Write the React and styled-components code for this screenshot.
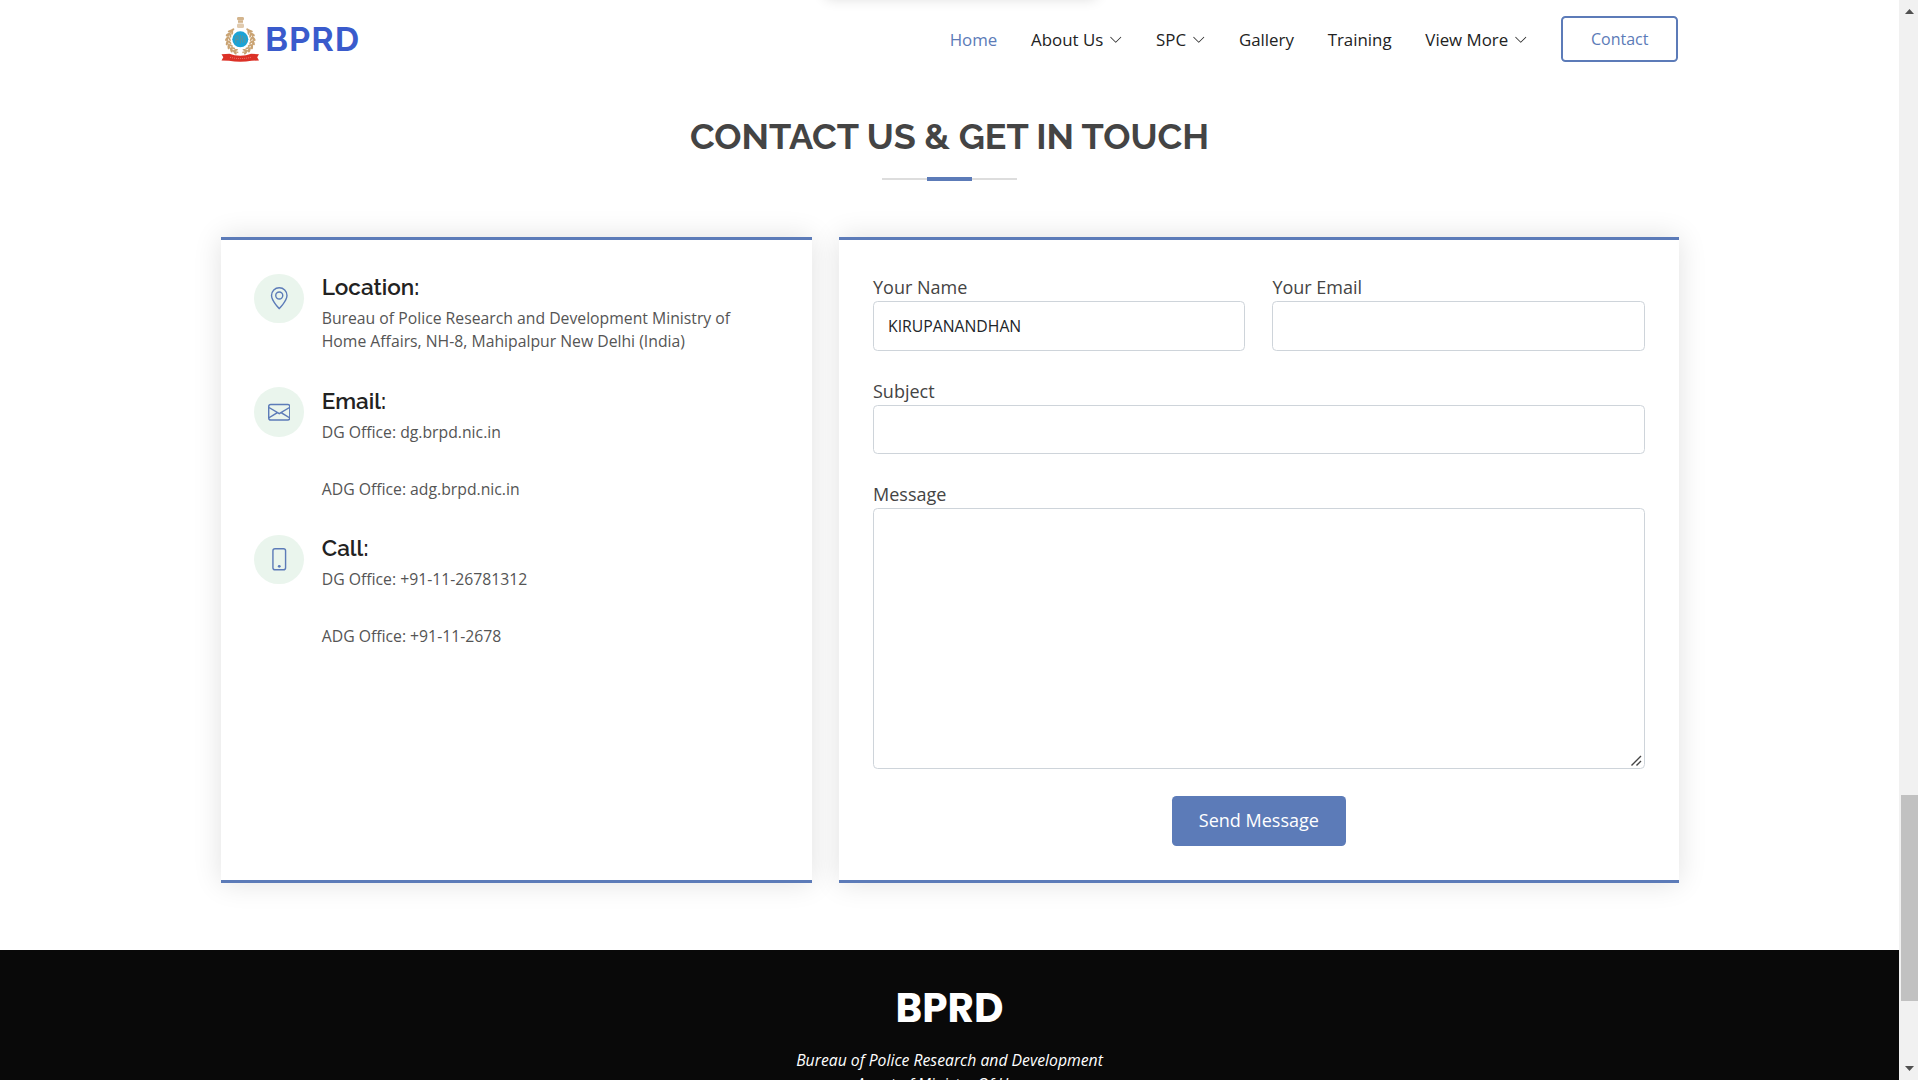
import React from "react";
import styled, { createGlobalStyle } from "styled-components";

const BLUE = "#5c7bb8";
const BODY = '"Open Sans", "Noto Sans", sans-serif';
const DISPLAY = 'Raleway, Lato, sans-serif';

const GlobalStyle = createGlobalStyle`
  * { box-sizing: border-box; }
  html, body { margin: 0; padding: 0; overflow: hidden; background: #fff; }
  body { font-family: ${BODY}; font-size: 18px; line-height: 1.5; color: #444; }
`;

const Window = styled.div`
  display: grid;
  grid-template-columns: 1fr 19px;
  height: 1080px;
  overflow: hidden;
`;

const Page = styled.div`
  position: relative;
  height: 1080px;
  overflow: hidden;
  background: #fff;
`;

const TopPopup = styled.div`
  position: absolute;
  top: -22px;
  left: 826px;
  width: 270px;
  height: 20px;
  box-shadow: 0 0 14px rgba(0, 0, 0, 0.16);
`;

const Container = styled.div`
  width: 1458px;
  margin: 0 auto;
`;

const Header = styled(Container).attrs({ as: "header" })`
  display: flex;
  align-items: center;
  justify-content: space-between;
  height: 79px;
`;

const Brand = styled.a`
  display: flex;
  align-items: center;
  gap: 5px;
  padding: 0 0 2px 0.5px;
`;

const BrandName = styled.span`
  font: 700 33.75px/40px ${DISPLAY};
  letter-spacing: 1.125px;
  color: #3a5bcc;
`;

const Nav = styled.nav`
  display: flex;
  align-items: center;
  gap: 33.75px;
`;

const NavLink = styled.a`
  display: flex;
  align-items: center;
  gap: 5.625px;
  font-size: 16.875px;
  line-height: 24px;
  white-space: nowrap;
  color: ${(p) => (p.$active ? BLUE : "#222")};
`;

const ContactLink = styled.a`
  width: 117px;
  height: 46px;
  margin: 0 0.8px 1.5px -0.4px;
  padding-left: 1px;
  border: 2px solid ${BLUE};
  border-radius: 4.5px;
  font-size: 16px;
  line-height: 42px;
  text-align: center;
  color: ${BLUE};
`;

const SectionTitle = styled.div`
  display: flex;
  flex-direction: column;
  align-items: center;
  height: 158px;
  padding-top: 36px;
`;

const Title = styled.h2`
  margin: 0;
  font: 700 36px/43px ${DISPLAY};
  white-space: nowrap;
  text-transform: uppercase;
  color: #444;
`;

const Rule = styled.div`
  display: flex;
  align-items: center;
  justify-content: center;
  width: 135px;
  height: 4px;
  margin-top: 19px;
  background: linear-gradient(#ddd, #ddd) center / 100% 2px no-repeat;
  &::before {
    content: "";
    width: 45px;
    height: 4px;
    background: ${BLUE};
  }
`;

const Cards = styled(Container)`
  display: grid;
  grid-template-columns: 591.75px 1fr;
  column-gap: 27px;
  height: 646px;
`;

const Card = styled.div`
  padding: ${(p) => p.$top || 34}px 33.75px 33px;
  border-top: 3px solid ${BLUE};
  border-bottom: 3px solid ${BLUE};
  background: #fff;
  box-shadow: 0 0 27px rgba(0, 0, 0, 0.12);
`;

const InfoItem = styled.div`
  display: grid;
  grid-template-columns: 49.5px 1fr;
  column-gap: 18px;
  align-items: start;
  height: ${(p) => p.$height}px;
`;

const IconDisc = styled.span`
  display: grid;
  place-items: center;
  width: 49.5px;
  height: 49.5px;
  border-radius: 50%;
  background: #eaf5ed;
  color: ${BLUE};
`;

const InfoHeading = styled.h4`
  margin: -0.8px 0 6px;
  font: 600 22.5px/28px ${DISPLAY};
  color: #222;
`;

const InfoText = styled.p`
  margin: 0 0 ${(p) => p.$after || 0}px;
  font-size: 15.75px;
  line-height: 23.2px;
  color: #555;
  white-space: nowrap;
`;

const Form = styled.form`
  display: flex;
  flex-direction: column;
  margin: 0;
`;

const Row = styled.div`
  display: grid;
  grid-template-columns: ${(p) => (p.$split ? "1fr 1fr" : "1fr")};
  column-gap: 27px;
  margin-bottom: 27px;
`;

const Field = styled.label`
  position: relative;
  display: flex;
  flex-direction: column;
  line-height: 27px;
`;

const Input = styled.input`
  height: 49.5px;
  width: 100%;
  padding: 0 14px;
  border: 1px solid #ced4da;
  border-radius: 4.5px;
  outline: none;
  font: 15.75px ${BODY};
  color: #212529;
`;

const TextArea = styled.textarea`
  height: 261px;
  width: 100%;
  border: 1px solid #ced4da;
  border-radius: 4.5px;
  outline: none;
  resize: none;
`;

const Grip = styled.svg`
  position: absolute;
  right: 3px;
  bottom: 3px;
`;

const Submit = styled.button`
  align-self: center;
  width: 174px;
  height: 50px;
  padding: 0 0 2px;
  border: 0;
  border-radius: 4.5px;
  background: ${BLUE};
  color: #fff;
  font: 18px/24px ${BODY};
`;

const Footer = styled.footer`
  height: 300px;
  margin-top: 67px;
  padding-top: 36px;
  background: #090909;
  color: #fff;
  text-align: center;
`;

const FooterName = styled.h3`
  margin: 0;
  font: 700 40.5px/44px Poppins, Inter, sans-serif;
`;

const FooterText = styled.p`
  margin: 18px auto 0;
  font-size: 15.75px;
  font-style: italic;
  line-height: 24px;
`;

const Scrollbar = styled.aside`
  display: grid;
  grid-template-rows: 795px 206px 1fr;
  background: #f1f1f1;
`;

const ScrollCap = styled.div`
  display: flex;
  justify-content: center;
  align-items: ${(p) => (p.$end ? "flex-end" : "flex-start")};
  padding: 9px 0 9px 1px;
`;

const Thumb = styled.div`
  margin-left: 2px;
  background: #c1c1c1;
`;

const Arrow = ({ down }) => (
  <svg width="9" height="5" viewBox="0 0 9 5">
    <path d={down ? "M0 0h9L4.5 5z" : "M0 5h9L4.5 0z"} fill="#505050" />
  </svg>
);

const Chevron = () => (
  <svg width="13.5" height="13.5" viewBox="0 0 16 16" fill="currentColor">
    <path d="M1.646 4.646a.5.5 0 0 1 .708 0L8 10.293l5.646-5.647a.5.5 0 0 1 .708.708l-6 6a.5.5 0 0 1-.708 0l-6-6a.5.5 0 0 1 0-.708z" />
  </svg>
);

const icons = {
  pin: (
    <>
      <path d="M12.166 8.94c-.524 1.062-1.234 2.12-1.96 3.07A31.493 31.493 0 0 1 8 14.58a31.481 31.481 0 0 1-2.206-2.57c-.726-.95-1.436-2.008-1.96-3.07C3.304 7.867 3 6.862 3 6a5 5 0 0 1 10 0c0 .862-.305 1.867-.834 2.94zM8 16s6-5.686 6-10A6 6 0 0 0 2 6c0 4.314 6 10 6 10z" />
      <path d="M8 8a2 2 0 1 1 0-4 2 2 0 0 1 0 4zm0 1a3 3 0 1 0 0-6 3 3 0 0 0 0 6z" />
    </>
  ),
  envelope: (
    <path d="M0 4a2 2 0 0 1 2-2h12a2 2 0 0 1 2 2v8a2 2 0 0 1-2 2H2a2 2 0 0 1-2-2V4zm2-1a1 1 0 0 0-1 1v.217l7 4.2 7-4.2V4a1 1 0 0 0-1-1H2zm13 2.383-4.758 2.855L15 11.114v-5.73zm-.034 6.878L9.271 8.82 8 9.583 6.728 8.82l-5.694 3.44A1 1 0 0 0 2 13h12a1 1 0 0 0 .966-.739zM1 11.114l4.758-2.876L1 5.383v5.73z" />
  ),
  phone: (
    <>
      <path d="M11 1a1 1 0 0 1 1 1v12a1 1 0 0 1-1 1H5a1 1 0 0 1-1-1V2a1 1 0 0 1 1-1h6zM5 0a2 2 0 0 0-2 2v12a2 2 0 0 0 2 2h6a2 2 0 0 0 2-2V2a2 2 0 0 0-2-2H5z" />
      <path d="M8 14a1 1 0 1 0 0-2 1 1 0 0 0 0 2z" />
    </>
  ),
};

const Info = ({ icon, title, height, children }) => (
  <InfoItem $height={height}>
    <IconDisc>
      <svg width="22.5" height="22.5" viewBox="0 0 16 16" fill="currentColor">{icons[icon]}</svg>
    </IconDisc>
    <div>
      <InfoHeading>{title}</InfoHeading>
      {children}
    </div>
  </InfoItem>
);

/* One laurel leaf pair per angle, mirrored on both sides of the disc. */
const leaves = [52, 70, 88, 106, 124, 142, 160];

const Emblem = () => (
  <svg width="39" height="46" viewBox="0 0 39 46">
    <g fill="#d3b48c">
      <rect x="16" y="1" width="7" height="3.4" rx="1.4" />
      <rect x="17" y="4.4" width="5" height="2.4" />
      <rect x="16" y="7.6" width="7" height="4.4" rx="1.5" opacity=".7" />
    </g>
    {[1, -1].map((side) => (
      <g key={side} transform={`translate(19.3 24) scale(${side} 1)`}>
        <path d="M7.5-9.5A12 12 0 0 1 2 12.5" fill="none" stroke="#cfa878" strokeWidth="1.3" />
        {leaves.map((a) => (
          <g key={a} transform={`rotate(${a}) translate(0 -12.2)`} fill="#c9a373">
            <ellipse cx="0" cy="-1.5" rx="2.6" ry="1.2" transform="rotate(-35)" />
            <ellipse cx="0" cy="1.5" rx="2.3" ry="1" transform="rotate(30)" />
          </g>
        ))}
        <ellipse cx="7.8" cy="-10" rx="2.2" ry="1.1" fill="#c9a373" transform="rotate(38 7.8 -10)" />
      </g>
    ))}
    <circle cx="19.3" cy="23.3" r="8" fill="#1ba3d6" />
    <path d="M14.8 20v7.5M17 19.5v5M19.3 19v8.5M21.5 19.5v7M24 20v7M14.8 20h2.2M14.8 23.5h2M19.3 23h2.2" fill="none" stroke="#5a939c" strokeWidth="1" />
    <path d="M.5 38.3l8-.5c6 2.5 15.5 2.5 21.5 0l8 .5-1.8 3 1.8 3.2-7.5.2c-7 1.5-15.5 1.5-22.5 0l-7.5-.2 1.8-3.2z" fill="#dc3127" />
    <path d="M9 41.3c7 1.7 14 1.7 21 0" fill="none" stroke="#ee7770" strokeWidth="1" strokeDasharray="1 1" />
  </svg>
);

const links = [
  { label: "Home", active: true },
  { label: "About Us", menu: true },
  { label: "SPC", menu: true },
  { label: "Gallery" },
  { label: "Training" },
  { label: "View More", menu: true },
];

export default function App() {
  return (
    <>
      <GlobalStyle />
      <Window>
        <Page>
          <TopPopup />
          <Header>
            <Brand>
              <Emblem />
              <BrandName>BPRD</BrandName>
            </Brand>
            <Nav>
              {links.map((l) => (
                <NavLink key={l.label} $active={l.active}>
                  {l.label}
                  {l.menu && <Chevron />}
                </NavLink>
              ))}
              <ContactLink>Contact</ContactLink>
            </Nav>
          </Header>

          <SectionTitle>
            <Title>Contact Us &amp; Get In Touch</Title>
            <Rule />
          </SectionTitle>

          <Cards>
            <Card $top={33.75}>
              <Info icon="pin" title="Location:" height={113.6}>
                <InfoText>
                  Bureau of Police Research and Development Ministry of
                  <br />
                  Home Affairs, NH-8, Mahipalpur New Delhi (India)
                </InfoText>
              </Info>
              <Info icon="envelope" title="Email:" height={147.4}>
                <InfoText $after={34.4}>DG Office: dg.brpd.nic.in</InfoText>
                <InfoText>ADG Office: adg.brpd.nic.in</InfoText>
              </Info>
              <Info icon="phone" title="Call:" height={147}>
                <InfoText $after={34}>DG Office: +91-11-26781312</InfoText>
                <InfoText>ADG Office: +91-11-2678</InfoText>
              </Info>
            </Card>
            <Card>
              <Form>
                <Row $split>
                  <Field>
                    Your Name
                    <Input defaultValue="KIRUPANANDHAN" />
                  </Field>
                  <Field>
                    Your Email
                    <Input />
                  </Field>
                </Row>
                <Row>
                  <Field>
                    Subject
                    <Input />
                  </Field>
                </Row>
                <Row>
                  <Field>
                    Message
                    <TextArea />
                    <Grip width="11" height="11" viewBox="0 0 11 11" fill="none" stroke="#444" strokeWidth="1.4">
                      <path d="M.5 10.5l9.5-9.5M5.5 10.5l4.5-4.5" />
                    </Grip>
                  </Field>
                </Row>
                <Submit type="button">Send Message</Submit>
              </Form>
            </Card>
          </Cards>

          <Footer>
            <FooterName>BPRD</FooterName>
            <FooterText>
              Bureau of Police Research and Development
              <br />
              Agent of Ministry Of Home.
            </FooterText>
          </Footer>
        </Page>
        <Scrollbar>
          <ScrollCap>
            <Arrow />
          </ScrollCap>
          <Thumb />
          <ScrollCap $end>
            <Arrow down />
          </ScrollCap>
        </Scrollbar>
      </Window>
    </>
  );
}
